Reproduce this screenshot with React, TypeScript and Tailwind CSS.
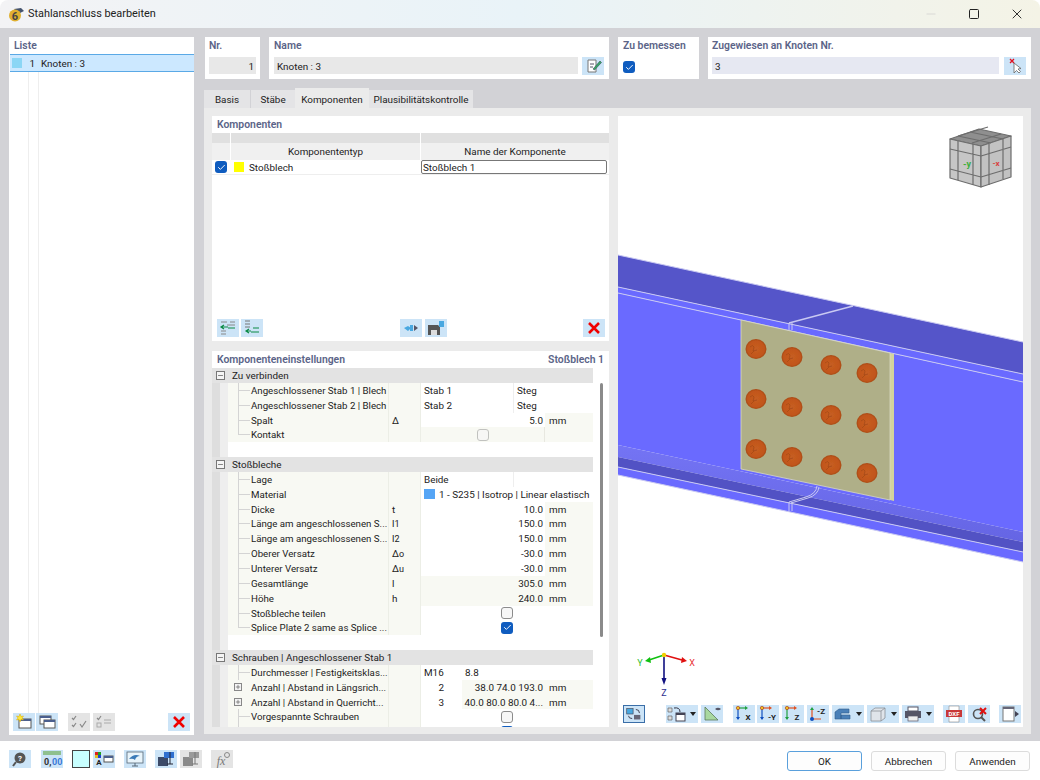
import React from "react";
import { Check, Minus, Plus, X, Square } from "lucide-react";

const fontFamily = 'Roboto, "Liberation Sans", sans-serif';

const Btn = ({ children, className = "", off = false }: { children?: React.ReactNode; className?: string; off?: boolean }) => (
  <span className={`flex h-[18px] w-[22px] flex-none items-center justify-center ${off ? "bg-[#e4e4e4]" : "bg-[#cce4f7]"} ${className}`}>
    <svg viewBox="0 0 22 18" width="22" height="18">{children}</svg>
  </span>
);

const Caret = () => (
  <span className="flex h-[18px] w-[10px] flex-none items-center justify-center bg-[#cce4f7]">
    <span className="h-0 w-0 border-x-[3.5px] border-t-[4px] border-x-transparent border-t-[#222]" />
  </span>
);

const RedX = () => <path d="M6 4l10 10M16 4L6 14" stroke="#f00000" strokeWidth="2.6" fill="none" />;

const Win = ({ x, y, w = 9, h = 8, fill = "#fff" }: { x: number; y: number; w?: number; h?: number; fill?: string }) => (
  <g>
    <rect x={x} y={y} width={w} height={h} fill={fill} stroke="#555" strokeWidth="1" />
    <rect x={x} y={y} width={w} height="2" fill="#4b5f8e" />
  </g>
);

const Heading = ({ children }: { children: React.ReactNode }) => (
  <div className="text-[10.4px] leading-[16px] font-semibold text-[#5b6488]">{children}</div>
);

const Box = ({ on = false, className = "" }: { on?: boolean; className?: string }) =>
  on ? (
    <span className={`flex h-[12px] w-[12px] flex-none items-center justify-center rounded-[3px] bg-[#0f5cbf] ${className}`}>
      <Check size={9} color="#fff" strokeWidth={2.5} />
    </span>
  ) : (
    <span className={`block h-[12px] w-[12px] flex-none rounded-[3px] border border-[#8c8c8c] bg-[#f7f7f7] ${className}`} />
  );

const Sub = ({ children }: { children: React.ReactNode }) => (
  <span className="text-[9px] align-[-2px]">{children}</span>
);

type Row = {
  group?: string;
  blank?: boolean;
  label?: string;
  expand?: boolean;
  sym?: React.ReactNode;
  a?: string;
  b?: string;
  num?: string;
  mm?: boolean;
  shade?: boolean;
  box?: "on" | "off";
  material?: boolean;
  n?: string;
  nums?: string;
};

const rows: Row[] = [
  { group: "Zu verbinden" },
  { label: "Angeschlossener Stab 1 | Blech", a: "Stab 1", b: "Steg" },
  { label: "Angeschlossener Stab 2 | Blech", a: "Stab 2", b: "Steg" },
  { label: "Spalt", sym: "Δ", num: "5.0", mm: true },
  { label: "Kontakt", box: "off", shade: true },
  { blank: true },
  { group: "Stoßbleche" },
  { label: "Lage", a: "Beide" },
  { label: "Material", material: true },
  { label: "Dicke", sym: "t", num: "10.0", mm: true },
  { label: "Länge am angeschlossenen S...", sym: <>l<Sub>1</Sub></>, num: "150.0", mm: true },
  { label: "Länge am angeschlossenen S...", sym: <>l<Sub>2</Sub></>, num: "150.0", mm: true },
  { label: "Oberer Versatz", sym: <>Δ<Sub>o</Sub></>, num: "-30.0", mm: true },
  { label: "Unterer Versatz", sym: <>Δ<Sub>u</Sub></>, num: "-30.0", mm: true },
  { label: "Gesamtlänge", sym: "l", num: "305.0", mm: true, shade: true },
  { label: "Höhe", sym: "h", num: "240.0", mm: true, shade: true },
  { label: "Stoßbleche teilen", box: "off" },
  { label: "Splice Plate 2 same as Splice ...", box: "on" },
  { blank: true },
  { group: "Schrauben | Angeschlossener Stab 1" },
  { label: "Durchmesser | Festigkeitsklas...", n: "M16", nums: "8.8" },
  { label: "Anzahl | Abstand in Längsrich...", expand: true, n: "2", nums: "38.0 74.0 193.0", mm: true },
  { label: "Anzahl | Abstand in Querricht...", expand: true, n: "3", nums: "40.0 80.0 80.0 4...", mm: true },
  { label: "Vorgespannte Schrauben", box: "off" },
  { label: "", box: "on" },
];

const Strip = () => (
  <div className="flex w-[16px] flex-none self-stretch">
    <div className="w-[8px] bg-[#dedede]" />
    <div className="w-[8px] bg-[#eeeeee]" />
  </div>
);

const TreeRow = ({ r, last }: { r: Row; last: boolean }) => {
  if (r.group)
    return (
      <div className="flex h-[14.85px] flex-none items-center bg-[#e3e3e3]">
        <span className="ml-[4px] flex h-[9px] w-[9px] items-center justify-center border border-[#777] bg-[#f4f4f4]">
          <Minus size={7} color="#333" strokeWidth={2} />
        </span>
        <span className="ml-[7px] whitespace-nowrap pt-[2px]">{r.group}</span>
      </div>
    );
  if (r.blank)
    return (
      <div className="flex h-[14.85px] flex-none">
        <Strip />
      </div>
    );
  return (
    <div className="flex h-[14.85px] flex-none items-stretch">
      <Strip />
      <div className="flex w-[160px] flex-none items-center overflow-hidden bg-[#f8f9f3]">
        <span className="flex h-full w-[23px] flex-none">
          {r.expand ? (
            <span className="mt-[3px] ml-[6px] flex h-[8px] w-[8px] items-center justify-center border border-[#888] bg-[#f4f4f4]">
              <Plus size={6} color="#333" strokeWidth={2} />
            </span>
          ) : (
            <>
              <span className={`ml-[10px] w-px bg-[#d4d4d4] ${last ? "h-[8px]" : "h-full"}`} />
              <span className="mt-[7px] h-px w-[11px] bg-[#d4d4d4]" />
            </>
          )}
        </span>
        <span className="whitespace-nowrap pt-[2px] text-[9.7px]">{r.label}</span>
      </div>
      <div className="flex w-[33px] flex-none items-center border-x border-[#eceee6] bg-[#f8f9f3] pt-[2px] pl-[3px]">{r.sym}</div>
      <Value r={r} />
    </div>
  );
};

const Value = ({ r }: { r: Row }) => {
  if (r.material)
    return (
      <div className="flex w-[172px] flex-none items-center pl-[3px]">
        <span className="mr-[4px] h-[10px] w-[11px] flex-none bg-[#55a5f5]" />
        <span className="whitespace-nowrap pt-[2px]">1 - S235 | Isotrop | Linear elastisch</span>
      </div>
    );
  if (r.a)
    return (
      <div className="flex w-[172px] flex-none">
        <span className="flex w-[93px] items-center border-r border-[#eeeeee] pt-[2px] pl-[3px]">{r.a}</span>
        <span className="flex items-center pt-[2px] pl-[3px]">{r.b}</span>
      </div>
    );
  if (r.n)
    return (
      <div className="flex w-[172px] flex-none">
        <span className={`flex w-[41px] flex-none items-center pt-[2px] ${r.mm ? "justify-end pr-[18px]" : "pl-[3px]"}`}>{r.n}</span>
        <span className={`flex w-[83px] flex-none items-center whitespace-nowrap pt-[2px] pl-[3px] ${r.mm ? "justify-end bg-[#f8f9f3] pr-[2px]" : ""}`}>{r.nums}</span>
        <span className={`flex flex-1 items-center pt-[2px] pl-[4px] ${r.mm ? "bg-[#f8f9f3]" : ""}`}>{r.mm ? "mm" : ""}</span>
      </div>
    );
  if (r.box)
    return r.shade ? (
      <div className="flex w-[172px] flex-none items-center bg-[#f8f9f3]">
        <span className="flex w-[124px] flex-none items-center justify-center self-stretch border-r border-[#e8e8e0]">
          <Box on={r.box === "on"} className="opacity-50" />
        </span>
      </div>
    ) : (
      <div className="flex w-[172px] flex-none items-center justify-center">
        <Box on={r.box === "on"} />
      </div>
    );
  return (
    <div className={`flex w-[172px] flex-none ${r.shade ? "bg-[#f8f9f3]" : ""}`}>
      <span className="flex w-[124px] flex-none items-center justify-end pt-[2px] pr-[2px]">{r.num}</span>
      <span className="flex flex-1 items-center bg-[#f8f9f3] pt-[2px] pl-[4px]">mm</span>
    </div>
  );
};

const bolts = [
  [756, 349], [792, 357], [831, 365], [867, 373],
  [756, 399], [792, 407], [831, 415], [867, 423],
  [756, 449], [792, 457], [831, 465], [867, 473],
];

// 3D view drawn in page coordinates
const Scene = () => (
  <svg viewBox="618 116 405 611" className="absolute inset-0 h-full w-full">
    <defs>
      <radialGradient id="bolt" cx="50%" cy="50%" r="55%">
        <stop offset="0%" stopColor="#c65e22" />
        <stop offset="72%" stopColor="#c2561b" />
        <stop offset="100%" stopColor="#9a4414" />
      </radialGradient>
      <linearGradient id="fillet" x1="0" y1="0" x2="0" y2="1">
        <stop offset="0%" stopColor="#7474f4" />
        <stop offset="100%" stopColor="#6565e4" />
      </linearGradient>
      <filter id="soft"><feGaussianBlur stdDeviation="0.4" /></filter>
    </defs>
    <polygon points="618,255 1023,342 1023,374 618,287" fill="#5555c9" />
    <polygon points="618,287 1023,374 1023,382 618,293" fill="#6a6aff" />
    <polygon points="618,293 1023,382 1023,532 618,445" fill="#6a6aff" />
    <polygon points="618,445 1023,532 1023,542 618,457" fill="url(#fillet)" />
    <polygon points="618,457 1023,542 1023,552 618,467" fill="#5252c4" />
    <polygon points="618,467 1023,552 1023,562 618,475" fill="#6a6aff" />
    <g stroke="#c9c9f2" strokeWidth="1" fill="none">
      <path d="M618 255L1023 342M618 287L1023 374M618 293L1023 382M618 467L1023 552M618 475L1023 562" />
      <path d="M789 323L853 306" strokeWidth="1.4" />
      <path d="M789 323V330M792 323V330" />
      <path d="M789 502L806 497Q816 494 817 486M791 503L808 498Q818 495 819 487" />
      <path d="M789 502V511M792 502V511" />
    </g>
    <polygon points="890,353 894,354 894,501 890,500" fill="#d4d49c" />
    <polygon points="741,320 890,353 890,500 741,469" fill="#afaf88" stroke="#d9d9c0" strokeWidth="0.8" />
    {bolts.map(([x, y], i) => (
      <g key={i} filter="url(#soft)">
        <ellipse cx={x} cy={y} rx="10.5" ry="10" fill="url(#bolt)" />
        <path d={`M${x - 6} ${y - 2}q3 -3 4 0l-1 4l4 -1M${x - 5} ${y + 5}l3 -3`} stroke="#a64a18" strokeWidth="0.8" fill="none" />
      </g>
    ))}
    {/* navigation cube */}
    <g stroke="#6d6d6d" strokeWidth="1.2" strokeLinejoin="round">
      <polygon points="950,139 979,129 1011,136 981,146" fill="#8f8f8f" />
      <polygon points="950,139 981,146 981,187 950,178" fill="#c6c6c6" />
      <polygon points="981,146 1011,136 1011,177 981,187" fill="#c2c2c2" />
      <path d="M958 141V180M973 144V185M989 144V185M1003 139V179M950 149L981 156L1011 147M950 169L981 177L1011 168" fill="none" />
      <path d="M958 136L991 143M970 132L1003 139M972 143L1001 134M958 136L988 127" fill="none" />
    </g>
    <text x="967" y="167" fontSize="9" fontWeight="700" fill="#3cae3c" textAnchor="middle" fontFamily={fontFamily}>-y</text>
    <text x="996" y="166" fontSize="8" fontWeight="700" fill="#d84040" textAnchor="middle" fontFamily={fontFamily}>-x</text>
    {/* axis cross */}
    <path d="M664 655L682 660" stroke="#e01010" strokeWidth="1.6" />
    <path d="M682 657L687 661L681 663Z" fill="#e01010" />
    <path d="M664 655L649 660" stroke="#10c010" strokeWidth="1.6" />
    <path d="M650 657L645 661L651 663Z" fill="#10c010" />
    <path d="M664 655V679" stroke="#101080" strokeWidth="1.6" />
    <path d="M661.500 678L664 685L666.500 678Z" fill="#101080" />
    <circle cx="664" cy="655" r="2.2" fill="#f0d000" />
    <text x="692" y="666" fontSize="9" fill="#e83030" textAnchor="middle" fontFamily={fontFamily}>X</text>
    <text x="640" y="666" fontSize="9" fill="#30c030" textAnchor="middle" fontFamily={fontFamily}>Y</text>
    <text x="664" y="696" fontSize="9" fill="#303090" textAnchor="middle" fontFamily={fontFamily}>Z</text>
  </svg>
);

const AxisIcon = ({ label, c1, c2 }: { label: string; c1: string; c2: string }) => (
  <>
    <path d="M5 3V14" stroke={c2} strokeWidth="1.2" />
    <path d="M3 12l2 3 2-3z" fill={c2} />
    <path d="M5 3H13" stroke={c1} strokeWidth="1.2" />
    <path d="M12 1l3 2-3 2z" fill={c1} />
    <circle cx="5" cy="3" r="1.7" fill="#f0c020" stroke="#a03020" strokeWidth="0.6" />
    <text x="15" y="15" fontSize="8" fontWeight="700" textAnchor="middle" fill="#222" fontFamily={fontFamily}>{label}</text>
  </>
);

const App = () => {
  return (
    <div className="flex h-[780px] w-[1040px] flex-col overflow-hidden text-[9.9px] leading-[14.85px] text-[#222]" style={{ fontFamily }}>
      {/* title bar */}
      <div className="flex h-[28px] flex-none items-center rounded-t-[8px] bg-gradient-to-r from-[#f3f3f5] via-[#e9f3f8] to-[#f4f3e6] pl-[7px]">
        <svg viewBox="0 0 18 18" width="18" height="18">
          <path d="M7 4L14 3L17 6L11 9Z" fill="#44536e" />
          <circle cx="8" cy="10.500" r="6" fill="#e0b030" />
          <text x="8" y="14.500" fontSize="11" fontWeight="700" textAnchor="middle" fill="#444" fontFamily={fontFamily}>6</text>
        </svg>
        <span className="ml-[3px] text-[10.9px] text-[#222]">Stahlanschluss bearbeiten</span>
        <div className="ml-auto flex items-center">
          <Minus size={14} color="#c8c8c8" strokeWidth={1} className="mr-[30px]" />
          <Square size={12} color="#222" strokeWidth={2} className="mr-[29px]" />
          <X size={16} color="#222" strokeWidth={1.4} className="mr-[15px]" />
        </div>
      </div>

      {/* body */}
      <div className="flex h-[713px] flex-none bg-[#d2d2d6] pt-[9px] pr-[9px] pb-[6px] pl-[9px]">
        {/* list */}
        <div className="flex w-[185px] flex-none flex-col bg-white">
          <div className="px-[5px] pt-px"><Heading>Liste</Heading></div>
          <div className="ml-px flex h-[18px] items-center border-y border-[#5aa9e6] bg-[#cce8ff]">
            <span className="ml-[2px] h-[10px] w-[10px] flex-none bg-[#8bd6f5]" />
            <span className="w-[13px] pt-[2px] text-right">1</span>
            <span className="ml-[6px] pt-[2px]">Knoten : 3</span>
          </div>
          <div className="flex flex-1">
            <span className="ml-[19px] w-px bg-[#eeeeee]" />
            <span className="ml-[9px] w-px bg-[#eeeeee]" />
          </div>
          <div className="flex h-[22px] items-start pl-[4px]">
            <Btn>
              <Win x={6} y={6} w={12} h={9} />
              <path d="M7 1l1 2.500 2.500-.5-1.500 2 1.500 2-2.500-.5-1 2.500-1-2.500-2.500.5 1.500-2-1.500-2 2.500.5z" fill="#ffe838" stroke="#d8a800" strokeWidth="0.5" />
            </Btn>
            <Btn className="ml-px"><Win x={4} y={3} w={11} h={8} /><Win x={8} y={7} w={11} h={8} /></Btn>
            <Btn off className="ml-[10px]">
              <path d="M4 5l1.500 1.500L8 3M4 12l1.500 1.500L8 10M12 11l2 3 4-6" stroke="#888" strokeWidth="1.2" fill="none" />
            </Btn>
            <Btn off className="ml-[3px]">
              <path d="M4 5l1.500 1.500L8 3" stroke="#888" strokeWidth="1.2" fill="none" />
              <rect x="4" y="10" width="4" height="4" fill="none" stroke="#aaa" />
              <path d="M11 7h7M11 10h7" stroke="#aaa" strokeWidth="1.2" />
            </Btn>
            <Btn className="ml-[53px]"><RedX /></Btn>
          </div>
        </div>

        {/* right side */}
        <div className="ml-[10px] flex min-w-0 flex-1 flex-col">
          {/* header cards */}
          <div className="ml-px flex h-[42px] flex-none gap-[9px]">
            <div className="w-[55px] flex-none bg-white px-[4px] pt-px">
              <Heading>Nr.</Heading>
              <div className="mt-[3px] h-[17px] bg-[#e8e8e8] pr-[2px] text-right leading-[19px]">1</div>
            </div>
            <div className="w-[340px] flex-none bg-white px-[5px] pt-px">
              <Heading>Name</Heading>
              <div className="mt-[3px] flex">
                <div className="h-[17px] w-[305px] bg-[#e8e8e8] pl-[3px] leading-[19px]">Knoten : 3</div>
                <Btn className="ml-[4px]">
                  <path d="M6 3H14V15H6Z" fill="#fff" stroke="#777" />
                  <path d="M8 7H12M8 10H11" stroke="#556" />
                  <path d="M11 12L18 4l1.500 1.500L12.500 13z" fill="#3a6" stroke="#334" strokeWidth="0.5" />
                </Btn>
              </div>
            </div>
            <div className="w-[81px] flex-none bg-white px-[5px] pt-px">
              <Heading>Zu bemessen</Heading>
              <Box on className="mt-[7px]" />
            </div>
            <div className="flex-1 bg-white px-[4px] pt-px">
              <Heading>Zugewiesen an Knoten Nr.</Heading>
              <div className="mt-[3px] flex">
                <div className="h-[17px] w-[287px] bg-[#e6e8f2] pl-[3px] leading-[19px]">3</div>
                <Btn className="ml-[5px]">
                  <path d="M10 6L10 16L12.500 13.500L15 16L16.500 14.500L14 12L17 11.500Z" fill="#fff" stroke="#666" strokeWidth="0.8" />
                  <path d="M6 2l4 4M10 2l-4 4" stroke="#e01020" strokeWidth="1.3" />
                </Btn>
              </div>
            </div>
          </div>

          {/* tabs */}
          <div className="mt-[9px] flex h-[20px] flex-none items-end">
            <span className="flex h-[18px] w-[46px] items-center justify-center bg-[#e4e4e6] pt-[3px]">Basis</span>
            <span className="ml-px flex h-[18px] w-[44px] items-center justify-center bg-[#e4e4e6] pt-[3px]">Stäbe</span>
            <span className="flex h-[20px] w-[74px] items-center justify-center bg-[#ebebeb] pt-[5px]">Komponenten</span>
            <span className="flex h-[18px] w-[104px] items-center justify-center whitespace-nowrap bg-[#e4e4e6] pt-[3px]">Plausibilitätskontrolle</span>
          </div>

          {/* tab content */}
          <div className="flex h-[626px] flex-none gap-[9px] bg-[#ebebeb] p-[8px] pb-[7px]">
            <div className="flex w-[397px] flex-none flex-col gap-[10px]">
              {/* components table */}
              <div className="flex h-[225px] flex-none flex-col bg-white">
                <div className="h-[17px] flex-none px-[5px] pt-px"><Heading>Komponenten</Heading></div>
                <div className="flex h-[10px] flex-none gap-px bg-white">
                  <div className="w-[18px] bg-[#e0e0e0]" />
                  <div className="w-[189px] bg-[#e0e0e0]" />
                  <div className="flex-1 bg-[#e0e0e0]" />
                </div>
                <div className="flex h-[17px] flex-none gap-px">
                  <div className="w-[18px] bg-[#f0f0f0]" />
                  <div className="w-[189px] bg-[#f0f0f0] text-center leading-[18px]">Komponententyp</div>
                  <div className="flex-1 bg-[#f0f0f0] text-center leading-[18px]">Name der Komponente</div>
                </div>
                <div className="flex h-[15px] flex-none items-center border-b border-[#eeeeee]">
                  <Box on className="ml-[3px]" />
                  <span className="ml-[7px] h-[10px] w-[10px] bg-[#ffff00]" />
                  <span className="ml-[5px] w-[172px] pt-[3px]">Stoßblech</span>
                  <span className="h-[14px] w-[186px] rounded-[2px] border border-[#777] pl-px leading-[14px]">Stoßblech 1</span>
                </div>
                <div className="mt-auto mb-[4px] flex h-[18px] flex-none pr-[4px] pl-[5px]">
                  <Btn>
                    <path d="M4 3H10M13 3H18M10 6H18M4 12H9M4 15H9" stroke="#888" strokeWidth="1" fill="none" />
                    <path d="M11 8H5M7 6L4 8 7 10M11 9H18" stroke="#0a8a45" strokeWidth="1.2" fill="none" />
                  </Btn>
                  <Btn className="ml-[2px]">
                    <path d="M4 2H9M4 5H9M4 8H9" stroke="#777" />
                    <path d="M10 12L5 12M8 10L5 12 8 14M10 13H18M12 9H18" stroke="#0a8a45" strokeWidth="1.2" fill="none" />
                  </Btn>
                  <Btn className="ml-[137px]">
                    <path d="M4 9l4-2 3 2-3 3zM10 6h3v6h-3z" fill="#49a8e0" />
                    <path d="M14 6l4 3-4 3z" fill="#556" />
                  </Btn>
                  <Btn className="ml-[3px]">
                    <path d="M3 6H13L15 8V16H3Z" fill="#555" />
                    <path d="M6 11h6v5H6z" fill="#ddd" />
                    <rect x="14" y="2" width="5" height="6" fill="#49a8e0" />
                  </Btn>
                  <Btn className="ml-auto"><RedX /></Btn>
                </div>
              </div>

              {/* settings tree */}
              <div className="flex min-h-0 flex-1 flex-col overflow-hidden bg-white">
                <div className="flex h-[17px] flex-none items-center justify-between px-[5px]">
                  <Heading>Komponenteneinstellungen</Heading>
                  <Heading>Stoßblech 1</Heading>
                </div>
                <div className="flex min-h-0 flex-1">
                  <div className="flex w-[381px] flex-none flex-col overflow-hidden">
                    {rows.map((r, i) => (
                      <TreeRow key={i} r={r} last={!!rows[i + 1] && !!rows[i + 1].blank} />
                    ))}
                  </div>
                  <div className="mt-[15px] ml-[7px] h-[254px] w-[3px] rounded-full bg-[#8a8a8a]" />
                </div>
              </div>
            </div>

            {/* 3D viewport */}
            <div className="relative flex min-w-0 flex-1 flex-col bg-white">
              <Scene />
              <div className="relative mt-auto mb-[4px] flex h-[18px] items-center pl-[5px]">
                <Btn className="border border-[#3a6ea8]">
                  <rect x="3" y="3" width="7" height="6" fill="#49a8e0" stroke="#445" strokeWidth="0.7" />
                  <rect x="11" y="10" width="7" height="5" fill="#667" />
                  <path d="M13 4q4 0 4 4M9 14q-4 0-4-3" stroke="#334" fill="none" />
                </Btn>
                <Btn className="ml-[21px]">
                  <path d="M2 3h4v4H2zM2 11h4v4H2z" fill="#ddd" stroke="#666" strokeWidth="0.7" />
                  <path d="M8 3q6-1 6 4" stroke="#334" fill="none" />
                  <rect x="10" y="8" width="9" height="8" fill="#fff" stroke="#445" />
                  <rect x="10" y="8" width="9" height="2" fill="#445" />
                </Btn>
                <Caret />
                <Btn className="ml-[3px]">
                  <path d="M4 15V2L17 15Z" fill="#a8d8a0" stroke="#5a7a5a" strokeWidth="0.8" />
                  <path d="M14 4q3-2.500 6 0-3 2.500-6 0z" fill="#556" />
                </Btn>
                <Btn className="ml-[10px]"><AxisIcon label="X" c1="#20a040" c2="#1050c0" /></Btn>
                <Btn className="ml-[2px]"><AxisIcon label="-Y" c1="#e05020" c2="#1050c0" /></Btn>
                <Btn className="ml-[3px]"><AxisIcon label="Z" c1="#e05020" c2="#20a040" /></Btn>
                <Btn className="ml-[3px]">
                  <path d="M5 4V14H14" stroke="#e05020" strokeWidth="1.2" fill="none" />
                  <path d="M3 5l2-3 2 3z" fill="#20a040" />
                  <circle cx="5" cy="14" r="2" fill="#1050c0" />
                  <text x="14" y="9" fontSize="8" fontWeight="700" textAnchor="middle" fill="#222" fontFamily={fontFamily}>-Z</text>
                </Btn>
                <Btn className="ml-[3px]">
                  <path d="M3 7l4-3h10v4H9v6H3zM9 10h9v4H9z" fill="#4a80b8" stroke="#2f5a8a" strokeWidth="0.6" />
                </Btn>
                <Caret />
                <Btn className="ml-[3px]">
                  <path d="M4 6l4-3h10v10l-4 3H4zM4 6h10v10M14 6l4-3" fill="#dfe4ea" stroke="#8a9098" strokeWidth="0.8" />
                </Btn>
                <Caret />
                <Btn className="ml-[3px]">
                  <rect x="6" y="2" width="10" height="4" fill="#fff" stroke="#556" />
                  <rect x="3" y="6" width="16" height="7" fill="#556" />
                  <rect x="6" y="11" width="10" height="5" fill="#eee" stroke="#556" strokeWidth="0.7" />
                </Btn>
                <Caret />
                <Btn className="ml-[9px]">
                  <path d="M6 1h10v16H6z" fill="#fff" stroke="#999" strokeWidth="0.7" />
                  <rect x="3" y="5" width="16" height="7" fill="#c83838" />
                  <text x="11" y="11" fontSize="6" fontWeight="700" textAnchor="middle" fill="#fff" fontFamily={fontFamily}>DXF</text>
                </Btn>
                <Btn className="ml-[3px]">
                  <circle cx="10" cy="9" r="4.500" fill="none" stroke="#555" strokeWidth="1.6" />
                  <path d="M13 12l4 4" stroke="#555" strokeWidth="2" />
                  <path d="M12 3l6 6M18 3l-6 6" stroke="#e01010" strokeWidth="2" />
                </Btn>
                <Btn className="ml-[9px]">
                  <rect x="4" y="2" width="11" height="14" fill="#fff" stroke="#777" />
                  <rect x="4" y="2" width="11" height="2" fill="#667" />
                  <path d="M16 6l4 3-4 3z" fill="#445" />
                </Btn>
              </div>
            </div>
          </div>
        </div>
      </div>

      {/* footer */}
      <div className="flex flex-1 items-start bg-white pt-[9px]">
        <Btn className="ml-[9px]">
          <circle cx="11" cy="8" r="5.500" fill="#555" />
          <path d="M7 12l-3 4" stroke="#555" strokeWidth="2" />
          <text x="11" y="11" fontSize="8" fontWeight="700" textAnchor="middle" fill="#fff" fontFamily={fontFamily}>?</text>
        </Btn>
        <Btn className="ml-[10px]">
          <rect x="2" y="1" width="18" height="4" fill="#8fc08f" />
          <text x="3" y="15" fontSize="9" fontWeight="700" fill="#333" fontFamily={fontFamily}>0,</text>
          <text x="11" y="15" fontSize="9" fontWeight="700" fill="#3a7ad8" fontFamily={fontFamily}>00</text>
        </Btn>
        <span className="ml-[9px] h-[18px] w-[18px] flex-none border border-[#444] bg-[#c8ffff]" />
        <Btn className="ml-[3px]">
          <rect x="2" y="2" width="3" height="3" fill="#e02020" />
          <rect x="5" y="2" width="3" height="3" fill="#20a020" />
          <rect x="2" y="5" width="3" height="3" fill="#e0c020" />
          <rect x="5" y="5" width="3" height="3" fill="#2040d0" />
          <text x="6" y="15" fontSize="8" fontWeight="700" textAnchor="middle" fill="#222" fontFamily={fontFamily}>A</text>
          <Win x={11} y={6} w={9} h={6} />
        </Btn>
        <Btn className="ml-[9px]">
          <rect x="3" y="2" width="16" height="11" fill="#e8f4fb" stroke="#567" strokeWidth="0.8" />
          <path d="M5 9q5-6 11-3-4 0-5 4-2-2-6-1z" fill="#3a7ab8" />
          <path d="M8 16h6M11 13v3" stroke="#567" />
        </Btn>
        <Btn className="ml-[9px]">
          <path d="M3 7H13V16H3Z" fill="#3c4a68" />
          <rect x="9" y="2" width="10" height="6" fill="#3070d0" />
          <path d="M15 2v12M12 14h6" stroke="#223" />
        </Btn>
        <Btn off className="ml-[3px]">
          <path d="M3 7H13V16H3Z" fill="#8a8a8a" />
          <rect x="9" y="2" width="10" height="6" fill="#9a9a9a" />
          <path d="M15 2v12M12 14h6" stroke="#777" />
        </Btn>
        <Btn off className="ml-[9px]">
          <text x="10" y="15" fontSize="12" fontStyle="italic" fill="#777" textAnchor="middle" fontFamily='"Liberation Serif", serif'>fx</text>
          <circle cx="16" cy="5" r="2.500" fill="none" stroke="#888" />
        </Btn>
        <div className="ml-auto flex gap-[9px] pt-px pr-[10px]">
          <span className="flex h-[20px] w-[75px] items-center justify-center rounded-[3px] border border-[#5aa0dc] bg-[#fdfdfd] pt-[2px]">OK</span>
          <span className="flex h-[20px] w-[75px] items-center justify-center rounded-[3px] border border-[#dcdcdc] bg-[#fdfdfd] pt-[2px]">Abbrechen</span>
          <span className="flex h-[20px] w-[75px] items-center justify-center rounded-[3px] border border-[#dcdcdc] bg-[#fdfdfd] pt-[2px]">Anwenden</span>
        </div>
      </div>
    </div>
  );
};

export default App;
